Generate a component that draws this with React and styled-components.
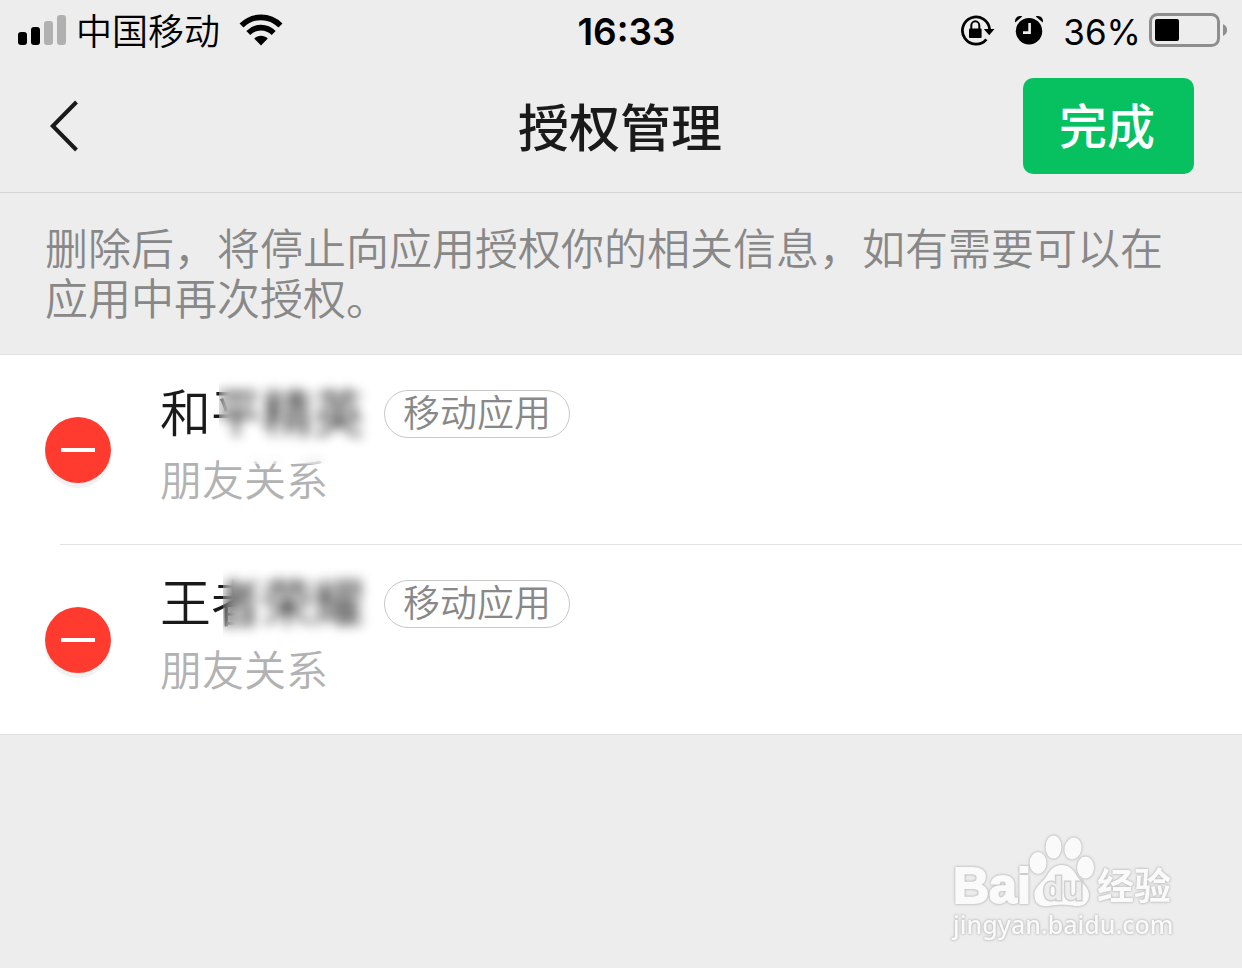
import React from 'react';
import styled, { createGlobalStyle } from 'styled-components';

const GlobalStyle = createGlobalStyle`
  * {
    box-sizing: border-box;
  }

  body {
    margin: 0;
    background-color: #ededed;
    color: #1a1a1a;
    font-family: Inter, 'Noto Sans CJK SC', sans-serif;
    font-weight: 350;
  }
`;

const Page = styled.div`
  display: flex;
  flex-direction: column;
  min-height: 100vh;
`;

const StatusBar = styled.div`
  display: grid;
  grid-template-columns: 1fr auto 1fr;
  align-items: center;
  height: 60px;
  padding: 0 15px 0 18px;
  color: #000000;
  font-size: 36px;
  line-height: 56px;
`;

const StatusGroup = styled.div`
  display: flex;
  align-items: center;
  justify-content: ${({ $end }) => ($end ? 'flex-end' : 'flex-start')};
`;

const Carrier = styled.span`
  margin: 0 19px 0 10px;
  padding-top: 4px;
`;

const Clock = styled.time`
  padding: 4px 0 0 8px;
  font-size: 37px;
  font-weight: 600;
`;

const Percent = styled.span`
  margin: 0 8px 0 19px;
  padding-top: 3px;
  font-size: 35px;
  font-weight: 400;
`;

const NavBar = styled.header`
  display: grid;
  grid-template-columns: 1fr auto 1fr;
  align-items: center;
  height: 133px;
  padding: 0 48px;
  border-bottom: 1px solid #d5d5d5;
`;

const BackButton = styled.button`
  justify-self: start;
  display: flex;
  padding: 0;
  border: 0;
  background: none;
  cursor: pointer;
`;

const Title = styled.h1`
  margin: 0;
  padding: 6px 2px 0 0;
  font-size: 51px;
  font-weight: 500;
  line-height: 60px;
`;

const DoneButton = styled.button`
  justify-self: end;
  height: 96px;
  padding: 0 39px 6px 36px;
  border: 0;
  border-radius: 10px;
  background-color: #07c160;
  color: #ffffff;
  font-family: inherit;
  font-size: 48px;
  font-weight: 500;
  cursor: pointer;
`;

const Description = styled.p`
  margin: 0;
  padding: 31px 45px 30px;
  color: #888888;
  font-size: 43px;
  line-height: 50px;
`;

const AppList = styled.ul`
  margin: 0;
  padding: 0;
  list-style: none;
  border-top: 1px solid #e2e2e2;
  border-bottom: 1px solid #e2e2e2;
  background-color: #ffffff;
`;

const AppRow = styled.li`
  display: flex;
  align-items: center;
  height: 189px;
  padding: 0 45px;
`;

const Divider = styled.li`
  height: 1px;
  margin-left: 60px;
  background-color: #e2e2e2;
`;

const RemoveButton = styled.button`
  display: flex;
  align-items: center;
  justify-content: center;
  width: 66px;
  height: 66px;
  margin-right: 49px;
  padding: 0;
  border: 0;
  border-radius: 50%;
  background-color: #ff3b30;
  box-shadow: 0 5px 0 #f2f2f2;
  cursor: pointer;
`;

const Minus = styled.span`
  width: 34px;
  height: 4px;
  background-color: #ffffff;
`;

const AppInfo = styled.div`
  position: relative;
  padding-bottom: 4px;
`;

const NameLine = styled.div`
  display: flex;
  align-items: center;
  gap: 20px;
  margin-bottom: 7px;
`;

const Name = styled.span`
  font-size: 51px;
  line-height: 60px;
`;

const Tag = styled.span`
  padding: 0 18px;
  border: 1px solid #c8c8c8;
  border-radius: 24px;
  color: #888888;
  font-size: 37px;
  line-height: 46px;
`;

const Scope = styled.div`
  color: #b2b2b2;
  font-size: 42px;
  line-height: 60px;
`;

// frosted patch that hides most of the app name
const Frost = styled.span`
  position: absolute;
  top: -10px;
  left: ${({ $left }) => $left}px;
  right: 188px;
  height: ${({ $height }) => $height}px;
  backdrop-filter: blur(6px);
`;

const Footer = styled.footer`
  display: flex;
  justify-content: flex-end;
  margin-top: auto;
  padding: 0 60px 21px;
`;

const LogoSvg = styled.svg`
  filter: drop-shadow(0 0 1px #b4b4b4) drop-shadow(0 0 1px #d0d0d0);
`;

const apps = [
  { name: '和平精英', tag: '移动应用', scope: '朋友关系', left: 59, height: 90 },
  { name: '王者荣耀', tag: '移动应用', scope: '朋友关系', left: 63, height: 76 },
];

const SignalIcon = () => (
  <svg width="48" height="32" viewBox="0 0 48 32" aria-hidden="true">
    <rect x="0" y="18" width="9" height="13" rx="3" />
    <rect x="13" y="13" width="9" height="18" rx="3" />
    <rect x="26" y="7" width="9" height="24" rx="3" fill="#b0b0b0" />
    <rect x="39" y="1" width="9" height="30" rx="3" fill="#b0b0b0" />
  </svg>
);

const WifiIcon = () => (
  <svg width="44" height="32" viewBox="0 0 44 32" aria-hidden="true">
    <g fill="none" stroke="#000000" strokeWidth="5.6">
      <path d="M2.5 11.5C13.5 0.6 30.5 0.6 41.5 11.5" />
      <path d="M9.3 18.9C16.6 11.8 27.4 11.8 34.7 18.9" />
    </g>
    <path d="M22 31.5L15.2 24.6C19.2 20.8 24.8 20.8 28.8 24.6Z" />
  </svg>
);

const RotationLockIcon = () => (
  <svg width="36" height="32" viewBox="0 0 36 32" aria-hidden="true">
    <path
      d="M26.4 25.4A13.6 13.6 0 1 1 29.6 15.5"
      fill="none"
      stroke="#000000"
      strokeWidth="2.8"
    />
    <path d="M23.8 15H34.5L29.2 21.2Z" />
    <rect x="9" y="14.6" width="12.6" height="9.4" rx="1" />
    <path
      d="M11.3 15V11.6a4 4.3 0 0 1 8 0V15"
      fill="none"
      stroke="#000000"
      strokeWidth="2"
    />
  </svg>
);

const AlarmIcon = () => (
  <svg width="30" height="32" viewBox="0 0 30 32" aria-hidden="true">
    <circle cx="15" cy="17.2" r="13.2" />
    <path d="M1.2 8.4C0.2 4.4 4 0.8 8.3 2.6Z" />
    <path d="M28.8 8.4C29.8 4.4 26 0.8 21.7 2.6Z" />
    <path d="M15.6 9V18.6H9" fill="none" stroke="#ededed" strokeWidth="2.6" />
  </svg>
);

const BatteryIcon = () => (
  <svg width="78" height="34" viewBox="0 0 78 34" aria-hidden="true">
    <rect
      x="1.5"
      y="1.5"
      width="68"
      height="31"
      rx="7"
      fill="none"
      stroke="#8e8e8e"
      strokeWidth="3"
    />
    <rect x="6" y="6" width="24" height="22" rx="2" />
    <path d="M74 11C79.5 13.5 79.5 20.5 74 23Z" fill="#8e8e8e" />
  </svg>
);

const BackIcon = () => (
  <svg width="32" height="52" viewBox="0 0 32 52" aria-hidden="true">
    <path d="M28.5 2L4.8 26L28.5 50" fill="none" stroke="#1a1a1a" strokeWidth="4" />
  </svg>
);

const BaiduLogo = () => (
  <LogoSvg width="232" height="114" viewBox="0 0 232 114" role="img" aria-label="Baidu 经验">
    <g fill="#fafafa">
      <text
        x="3"
        y="70"
        stroke="#fafafa"
        strokeWidth="2"
        fontFamily="Liberation Sans, sans-serif"
        fontSize="50"
        fontWeight="700"
      >
        Bai
      </text>
      <ellipse cx="88" cy="30" rx="8.5" ry="11" />
      <ellipse cx="103.5" cy="14" rx="8" ry="11.5" />
      <ellipse cx="123" cy="15.5" rx="8.5" ry="11" transform="rotate(12 123 15.5)" />
      <ellipse cx="135.5" cy="34.5" rx="8.5" ry="11" />
      <path d="M112 32C103 32 100 38 96 44C91 51 83 55 84.5 64C86 74 95 74 102 72.5C108 71.5 116 71.5 122 72.5C129 74 138 73 139 63C139.5 54 131 50 127 43C123 36 119 32 112 32Z" />
      <text x="147" y="67" fontFamily="Noto Sans CJK SC, sans-serif" fontSize="37" fontWeight="700">
        经验
      </text>
      <text x="3" y="101" fontFamily="Noto Sans, sans-serif" fontSize="25" fontWeight="500">
        jingyan.baidu.com
      </text>
    </g>
    <text
      x="93"
      y="67"
      fill="#ededed"
      stroke="#d0d0d0"
      strokeWidth="3"
      paintOrder="stroke"
      fontFamily="Liberation Sans, sans-serif"
      fontSize="33"
      fontWeight="700"
    >
      du
    </text>
  </LogoSvg>
);

const Spacer = styled.span`
  width: 18px;
`;

const App = () => {
  return (
    <Page lang="zh-CN">
      <GlobalStyle />
      <StatusBar>
        <StatusGroup>
          <SignalIcon />
          <Carrier>中国移动</Carrier>
          <WifiIcon />
        </StatusGroup>
        <Clock>16:33</Clock>
        <StatusGroup $end>
          <RotationLockIcon />
          <Spacer />
          <AlarmIcon />
          <Percent>36%</Percent>
          <BatteryIcon />
        </StatusGroup>
      </StatusBar>
      <NavBar>
        <BackButton type="button" aria-label="返回">
          <BackIcon />
        </BackButton>
        <Title>授权管理</Title>
        <DoneButton type="button">完成</DoneButton>
      </NavBar>
      <Description>
        删除后，将停止向应用授权你的相关信息，如有需要可以在应用中再次授权。
      </Description>
      <AppList>
        {apps.map((app, index) => (
          <React.Fragment key={app.name}>
            {index > 0 && <Divider role="separator" />}
            <AppRow>
              <RemoveButton type="button" aria-label={`删除${app.name}`}>
                <Minus />
              </RemoveButton>
              <AppInfo>
                <NameLine>
                  <Name>{app.name}</Name>
                  <Tag>{app.tag}</Tag>
                </NameLine>
                <Scope>{app.scope}</Scope>
                <Frost $left={app.left} $height={app.height} />
              </AppInfo>
            </AppRow>
          </React.Fragment>
        ))}
      </AppList>
      <Footer>
        <BaiduLogo />
      </Footer>
    </Page>
  );
};

export default App;
